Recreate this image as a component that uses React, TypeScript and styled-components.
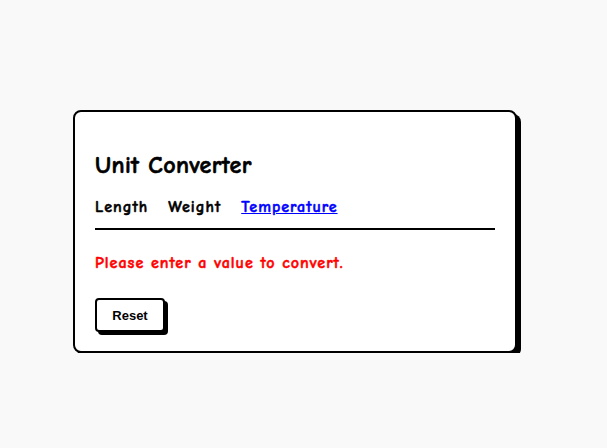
import React, { useState } from "react";
import styled, { createGlobalStyle } from "styled-components";

const GlobalStyle = createGlobalStyle`
  html, body {
    margin: 0;
    padding: 0;
    background: #f9f9f9;
  }
  body {
    font-family: "Comic Sans MS", "Comic Neue", "DejaVu Sans", cursive, sans-serif;
  }
`;

const Page = styled.div`
  padding: 110px 0 0 73px;
`;

const Card = styled.div`
  width: 444px;
  box-sizing: border-box;
  background: #fff;
  border: 2px solid #000;
  border-radius: 8px;
  box-shadow: 4px 4px 0 #000;
  padding: 20px 20px 19px;
`;

const Title = styled.h2`
  margin: 18px 0 15px;
  font-size: 24px;
  line-height: 31px;
  font-weight: bold;
  letter-spacing: 0.4px;
  -webkit-text-stroke: 0.6px #000;
  color: #000;
`;

const Tabs = styled.nav`
  display: flex;
  gap: 20px;
  padding-bottom: 10px;
  border-bottom: 2px solid #000;
`;

const Tab = styled.a<{ $active?: boolean }>`
  font-size: 16px;
  line-height: 22px;
  font-weight: bold;
  letter-spacing: 1px;
  -webkit-text-stroke: 0.5px currentColor;
  cursor: pointer;
  color: ${(p) => (p.$active ? "#0000ff" : "#000")};
  text-decoration: ${(p) => (p.$active ? "underline" : "none")};
`;

const Message = styled.p`
  margin: 22px 0 0;
  font-size: 16px;
  line-height: 22px;
  font-weight: bold;
  letter-spacing: 1px;
  -webkit-text-stroke: 0.5px #ff0000;
  color: #ff0000;
`;

const ResetButton = styled.button`
  display: block;
  margin-top: 24px;
  width: 70px;
  height: 34px;
  background: #fff;
  border: 2px solid #000;
  border-radius: 4px;
  box-shadow: 3px 3px 0 #000;
  font-family: "Liberation Sans", Arial, sans-serif;
  font-size: 13px;
  font-weight: bold;
  color: #000;
  cursor: pointer;
`;

const tabs = ["Length", "Weight", "Temperature"];

function App() {
  const [active, setActive] = useState("Temperature");

  return (
    <Page>
      <GlobalStyle />
      <Card>
        <Title>Unit Converter</Title>
        <Tabs>
          {tabs.map((t) => (
            <Tab key={t} $active={t === active} onClick={() => setActive(t)}>
              {t}
            </Tab>
          ))}
        </Tabs>
        <Message>Please enter a value to convert.</Message>
        <ResetButton>Reset</ResetButton>
      </Card>
    </Page>
  );
}

export default App;
